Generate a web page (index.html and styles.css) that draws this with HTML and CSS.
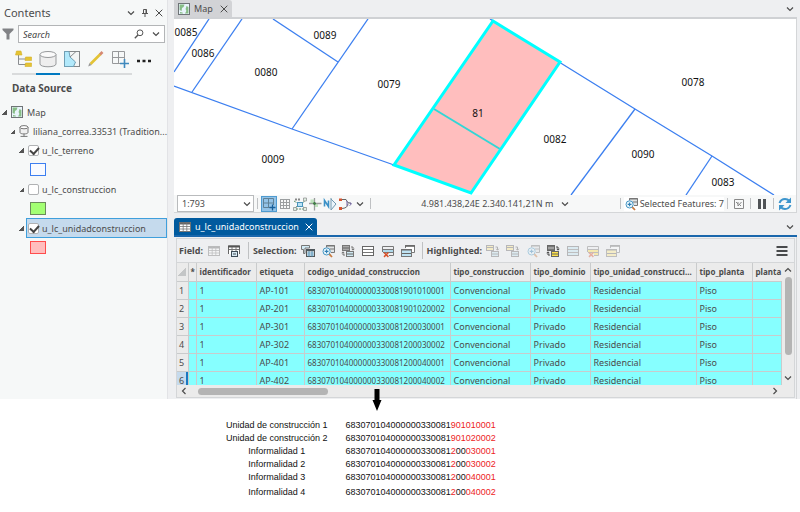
FILE: index.html
```html
<!DOCTYPE html>
<html lang="es">
<head>
  <meta charset="UTF-8">
  <title>Map - u_lc_unidadconstruccion</title>
  <link rel="stylesheet" href="styles.css">
</head>
<body>

  <svg class="sprite" aria-hidden="true">
    <symbol id="i-chevron" viewBox="0 0 8 8"><path d="M1 2.5 L4 5.5 L7 2.5" fill="none" stroke="currentColor" stroke-width="1.2"/></symbol>
    <symbol id="i-close" viewBox="0 0 8 8"><path d="M0.7 0.7 L7.3 7.3 M7.3 0.7 L0.7 7.3" fill="none" stroke="currentColor"/></symbol>
    <symbol id="i-mapa" viewBox="0 0 12 12">
      <rect x="0.5" y="0.5" width="11" height="11" fill="#e9f4fb" stroke="#6f7477"/>
      <path d="M1.6 1.6 H6.5 L5.6 4 L4 5 L3.6 8 L1.6 7 Z M8.5 3 L10.4 4 V10.4 H7 L8.4 8 L7.6 6 Z M2 9 L4.5 9.4 L5 10.4 H2 Z" fill="#86bd86"/>
    </symbol>
    <symbol id="i-sheet" viewBox="0 0 14 14">
      <rect x="1.5" y="2.5" width="11" height="9" fill="#fff" stroke="#777"/>
      <path d="M1.5 3.5 H12.5" stroke="#666" stroke-width="2"/>
      <path d="M1.5 6.5 H12.5 M1.5 9 H12.5 M5.2 3 V11 M8.8 3 V11" stroke="#777" stroke-width="0.8"/>
    </symbol>
    <symbol id="i-rows" viewBox="0 0 14 14">
      <rect x="1.5" y="2.5" width="11" height="9" fill="#fff" stroke="#666"/>
      <path d="M2 5.5 H12 M2 8.5 H12" stroke="#777"/>
    </symbol>
    <symbol id="i-rows-blue" viewBox="0 0 14 14">
      <rect x="1.5" y="2.5" width="11" height="9" fill="#bfe3f3" stroke="#666"/>
      <path d="M2 5.5 H12 M2 8.5 H12" stroke="#777"/>
    </symbol>
    <symbol id="i-rows-x" viewBox="0 0 14 14">
      <path d="M1.5 2.5 H12.5 V11.5 H8 M1.5 2.5 V8 M2 5.5 H12 M2 8.5 H12" fill="none" stroke="#777"/>
      <path d="M2 7 H12" stroke="#9fd4ea" stroke-width="1.6"/>
      <path d="M3 8.5 L7.4 12.9 M7.4 8.5 L3 12.9" stroke="#d8532c" stroke-width="1.5"/>
    </symbol>
    <symbol id="i-rows-yellow-x" viewBox="0 0 14 14">
      <path d="M1.5 2.5 H12.5 V11.5 H8 M1.5 2.5 V8 M2 5.5 H12 M2 8.5 H12" fill="none" stroke="#777"/>
      <path d="M2 7 H12 M8 10 H12" stroke="#ffdf4f" stroke-width="1.8"/>
      <path d="M3 8.5 L7.4 12.9 M7.4 8.5 L3 12.9" stroke="#d8532c" stroke-width="1.5"/>
    </symbol>
    <symbol id="i-stack" viewBox="0 0 14 14">
      <path d="M4.5 4 V1.5 H13.5 V8.5 H11" fill="#fff" stroke="#777"/>
      <path d="M4 2 H14" stroke="#666" stroke-width="1.6"/>
      <rect x="0.5" y="5.5" width="10" height="7" fill="#bfe3f3" stroke="#777"/>
      <path d="M0.5 6 H10.5 M1 9.5 H10" stroke="#666"/>
    </symbol>
    <symbol id="i-stack-yellow" viewBox="0 0 14 14">
      <path d="M4.5 4 V1.5 H13.5 V8.5 H11" fill="#fff" stroke="#777"/>
      <path d="M4 2 H14" stroke="#666" stroke-width="1.6"/>
      <rect x="0.5" y="5.5" width="10" height="7" fill="#ffe98a" stroke="#777"/>
      <path d="M0.5 6 H10.5 M1 9.5 H10" stroke="#666"/>
    </symbol>
    <symbol id="i-sel" viewBox="0 0 14 14">
      <path d="M2.5 9.5 V5.5 H0.5 V1.5 H8.5 V4 H4 V9.5 Z" fill="#d3ecf6" stroke="#777"/>
      <rect x="5.5" y="5.5" width="8" height="7" fill="#fff" stroke="#555"/>
      <path d="M5 6.3 H14" stroke="#4e5a60" stroke-width="2"/>
      <path d="M6 9 H13 M6 11 H13 M8 7 V13 M11 7 V13" stroke="#3f87ad" stroke-width="0.8"/>
    </symbol>
    <symbol id="i-zoom" viewBox="0 0 14 14">
      <path d="M5.5 3.5 V1.5 H13.5 V8.5 H10" fill="#e1e4e5" stroke="#777"/>
      <path d="M5 2 H14 M9 5 H13" stroke="#777"/>
      <circle cx="5.6" cy="7.4" r="3.6" fill="#e9f6fc" stroke="#4696c4"/>
      <path d="M3.7 7.4 H7.5 M5.6 5.5 V9.3" stroke="#2f7fb4" stroke-width="1.1"/>
      <path d="M8.3 10.2 L11 13" stroke="#c8793e" stroke-width="1.8"/>
    </symbol>
    <symbol id="i-switch" viewBox="0 0 14 14">
      <rect x="1.5" y="1.5" width="7" height="5" fill="#a9a9a9" stroke="#777"/>
      <rect x="5.5" y="7.5" width="7" height="5" fill="#cfe8f2" stroke="#777"/>
      <path d="M2 4 H8 M6 10 H12" stroke="#666"/>
      <path d="M10 3 H12 V6 M10.7 4.8 L12 6.2 L13.3 4.8 M4 11 H2 V8 M0.7 9.2 L2 7.8 L3.3 9.2" fill="none" stroke="#666" stroke-width="0.9"/>
    </symbol>
    <symbol id="i-switch-yellow" viewBox="0 0 14 14">
      <rect x="1.5" y="1.5" width="7" height="5" fill="#777" stroke="#666"/>
      <rect x="5.5" y="7.5" width="7" height="5" fill="#ffe24a" stroke="#666"/>
      <path d="M2 4 H8" stroke="#ccc"/>
      <path d="M6 10 H12" stroke="#666"/>
      <path d="M10 3 H12 V6 M10.7 4.8 L12 6.2 L13.3 4.8 M4 11 H2 V8 M0.7 9.2 L2 7.8 L3.3 9.2" fill="none" stroke="#444"/>
    </symbol>
    <symbol id="i-swap" viewBox="0 0 14 14">
      <rect x="0.5" y="1.5" width="7" height="5" fill="#ffe98a" stroke="#666"/>
      <rect x="5.5" y="7.5" width="7" height="5" fill="#bfe3f3" stroke="#666"/>
      <path d="M1 3.5 H7 M6 10 H12" stroke="#666"/>
      <path d="M9.5 3 H11.5 V6 M10.2 4.8 L11.5 6.2 L12.8 4.8" fill="none" stroke="#555"/>
    </symbol>
  </svg>

  <div class="workspace">
    <aside class="contents">
      <div class="contents-head">
        <h1>Contents</h1>
        <button class="plain" aria-label="Opciones"><svg class="i8"><use href="#i-chevron"/></svg></button>
        <button class="plain" aria-label="Fijar"><svg class="i8" viewBox="0 0 8 8"><path d="M2.5 0.5 H5.5 V4.5 H2.5 Z M1 4.5 H7 M4 4.5 V8" fill="none" stroke="#555"/><path d="M5 0.5 V4.5" stroke="#555"/></svg></button>
        <button class="plain" aria-label="Cerrar"><svg class="i8"><use href="#i-close"/></svg></button>
      </div>

      <div class="search-row">
        <svg class="i12" viewBox="0 0 12 12"><path d="M0.5 0.5 H11.5 V2 L7.5 6 V11.5 H4.5 V6 L0.5 2 Z" fill="#808285"/></svg>
        <div class="search-box">
          <input type="text" placeholder="Search" aria-label="Search">
          <button class="plain" aria-label="Buscar"><svg class="i10" viewBox="0 0 10 10"><circle cx="6" cy="3.8" r="2.9" fill="none" stroke="#555"/><path d="M4 6 L0.8 9.2" stroke="#555" stroke-width="1.4"/></svg></button>
          <button class="plain" aria-label="Opciones de búsqueda"><svg class="i8"><use href="#i-chevron"/></svg></button>
        </div>
      </div>

      <div class="views">
        <button class="view" aria-label="Drawing Order"><svg class="i18" viewBox="0 0 18 18"><path d="M3.5 5 V14.5 H11 M3.5 9 H11" fill="none" stroke="#8a8d90"/><path d="M1.5 1 H6 L7 5 H0.5 Z M10.5 7 H16.5 V10.5 H10 Z M10.5 13 H16.5 V16.5 H10 Z" fill="#e5c433" stroke="#d3b02b" stroke-width="0.6"/></svg></button>
        <button class="view active" aria-label="Data Source"><svg class="i18" viewBox="0 0 18 18"><path d="M1 4.5 V14 C1 17.7 17 17.7 17 14 V4.5" fill="#eee" stroke="#97999b"/><ellipse cx="9" cy="4.5" rx="8" ry="3" fill="#fafafa" stroke="#97999b"/></svg></button>
        <button class="view" aria-label="Selection"><svg class="i18" viewBox="0 0 18 18"><rect x="1.5" y="1.5" width="15" height="15" fill="#f3f5f5" stroke="#85888a"/><path d="M1.5 1.5 H6 L7 7 L12.5 12 L10.5 16.5 H1.5 Z" fill="#b2e9fb" stroke="#6f9fb5"/><path d="M7 7 L13 1.5" stroke="#85888a"/></svg></button>
        <button class="view" aria-label="Editing"><svg class="i18" viewBox="0 0 18 18"><path d="M3.5 14 L13.5 4" stroke="#e3c336" stroke-width="2.6"/><path d="M13 4.5 L15.5 2" stroke="#d58872" stroke-width="2.6"/><path d="M4.6 15.1 L2.4 12.9 L1.2 16.6 Z" fill="#999"/></svg></button>
        <button class="view" aria-label="Snapping"><svg class="i18" viewBox="0 0 18 18"><path d="M1.5 1.5 H13.5 V9 M1.5 1.5 V13.5 H9 M7.5 1.5 V13.5 M1.5 7.5 H13.5" fill="none" stroke="#97999b"/><path d="M13.5 9 V18 M9 13.5 H18" stroke="#4089bd" stroke-width="1.6"/></svg></button>
        <button class="view more" aria-label="Más"><svg class="i18" viewBox="0 0 18 18"><path d="M2 11 H5 M7.5 11 H10.5 M13 11 H16" stroke="#222" stroke-width="2.4"/></svg></button>
      </div>

      <h2>Data Source</h2>

      <ul class="tree">
        <li class="row"><span class="arrow"></span><svg class="i12"><use href="#i-mapa"/></svg>Map</li>
        <li class="row source"><span class="arrow"></span><svg class="i12" viewBox="0 0 12 12"><path d="M2 2 V7.5 C2 9.4 10 9.4 10 7.5 V2" fill="#f0f0f0" stroke="#777"/><ellipse cx="6" cy="2.2" rx="4" ry="1.6" fill="#fff" stroke="#777"/><path d="M6 9 V11.5 M2.5 11.4 H9.5" stroke="#777"/></svg><span class="elide">liliana_correa.33531 (Tradition...</span></li>
        <li class="row layer"><span class="arrow"></span><label><input type="checkbox" checked>u_lc_terreno</label></li>
        <li class="swatch"><span class="symbol terreno"></span></li>
        <li class="row layer"><span class="arrow"></span><label><input type="checkbox">u_lc_construccion</label></li>
        <li class="swatch"><span class="symbol construccion"></span></li>
        <li class="row layer selected"><span class="arrow"></span><label><input type="checkbox" checked>u_lc_unidadconstruccion</label></li>
        <li class="swatch"><span class="symbol unidad"></span></li>
      </ul>
    </aside>

    <main>
      <div class="tabs map-tabs">
        <div class="tab"><svg class="i12"><use href="#i-mapa"/></svg>Map<button class="plain" aria-label="Cerrar Map"><svg class="i8"><use href="#i-close"/></svg></button></div>
        <button class="plain" aria-label="Lista de vistas"><svg class="i8"><use href="#i-chevron"/></svg></button>
      </div>

      <section class="map-view">
        <svg class="map">
          <g class="terrenos">
            <path d="M35 0 L0 53"/>
            <path d="M68 0 L18 73"/>
            <path d="M99 0 L164 43"/>
            <path d="M194 0 L118 110"/>
            <path d="M0 67 L118 110 L220 146"/>
            <path d="M316 0 L385 43 L461 90 L538 137 L600 176"/>
            <path d="M461 90 L397 176"/>
            <path d="M538 137 L512 176"/>
          </g>
          <path class="unidad-fill" d="M319 2 L386 43 L297 174 L220 146 Z"/>
          <path class="unidad-mid" d="M260 90 L326 130"/>
          <path class="unidad-edge" d="M319 2 L386 43 L297 174 L220 146 Z"/>
          <g class="labels">
            <text x="12" y="17">0085</text>
            <text x="29" y="38">0086</text>
            <text x="151" y="20">0089</text>
            <text x="92" y="57">0080</text>
            <text x="215" y="69">0079</text>
            <text x="99" y="144">0009</text>
            <text x="519" y="67">0078</text>
            <text x="381" y="124">0082</text>
            <text x="469" y="139">0090</text>
            <text x="549" y="167">0083</text>
            <text x="304" y="98">81</text>
          </g>
        </svg>

        <div class="status">
          <div class="scale">
            <select aria-label="Escala"><option>1:793</option></select>
            <svg class="i8"><use href="#i-chevron"/></svg>
          </div>
          <span class="sep"></span>
          <button class="tool on" aria-label="Snapping"><svg class="i14" viewBox="0 0 14 14"><path d="M1.5 1.5 H11.5 V8 M1.5 1.5 V10.5 H8 M6.5 1.5 V10.5 M1.5 6 H11.5" fill="none" stroke="#5f8197"/><path d="M10.5 7.5 V13.5 M7.5 10.5 H13.5" stroke="#185f99" stroke-width="1.3"/></svg></button>
          <button class="tool" aria-label="Grid"><svg class="i14" viewBox="0 0 14 14"><path d="M2.5 2 V12 M5.5 2 V12 M8.5 2 V12 M11.5 2 V12 M2 2.5 H12 M2 5.5 H12 M2 8.5 H12 M2 11.5 H12" stroke="#9b9ea0"/></svg></button>
          <button class="tool" aria-label="Inference"><svg class="i14" viewBox="0 0 14 14"><path d="M1 4 L6 7 L1 12 H12 L8 7 L13 3" fill="none" stroke="#5b8e68" stroke-dasharray="2 1"/><path d="M2 2.5 H8" stroke="#888" stroke-width="2" stroke-dasharray="2 1"/><rect x="4.5" y="5.5" width="5" height="4" fill="#b9e2f4" stroke="#4a94bc"/><path d="M0.5 10.5 H3.5 V13.5 H0.5 Z M10.5 10.5 H13.5 V13.5 H10.5 Z M10.5 1 H13.5 V4 H10.5 Z" fill="#dff0e3" stroke="#888" stroke-width="0.7"/></svg></button>
          <button class="tool" aria-label="Constraints"><svg class="i14" viewBox="0 0 14 14"><path d="M1 6.5 H13.5 M6.5 1 V13.5" stroke="#9a9c9d" stroke-width="1.3"/><path d="M2.5 2.500 H6 V6 H2.500 Z M7 7 H10 V10 H7 Z" fill="#9bd598" opacity="0.6"/><path d="M5 6.5 H8 M6.5 5 V8" stroke="#417c46" stroke-width="1.4"/></svg></button>
          <button class="tool" aria-label="Ground to grid"><svg class="i14" viewBox="0 0 14 14"><path d="M1.5 9.5 V3.5 L5.5 9.5 V3.5" fill="none" stroke="#3b91c7" stroke-width="1.6"/><path d="M8 1 V13 L13 7 L8 2" fill="#eaf4fa" stroke="#7198b0"/></svg></button>
          <button class="tool" aria-label="Dynamic constraints"><svg class="i14" viewBox="0 0 14 14"><path d="M2 2.5 H8 Q9 6.5 13 6.5 M10 6.5 Q10 11.5 3 11.5" fill="none" stroke="#666"/><path d="M1 1.5 H4 V4 H1 Z M1 10 H4 V13 H1 Z" fill="#d8542f"/><path d="M9 4 V9 M11.5 5 L13.5 7 L11.5 8.5" fill="none" stroke="#7566a8"/></svg></button>
          <button class="tool" aria-label="Más herramientas"><svg class="i8"><use href="#i-chevron"/></svg></button>
          <span class="sep"></span>
          <span class="coords">4.981.438,24E 2.340.141,21N m <button class="plain" aria-label="Unidades"><svg class="i8"><use href="#i-chevron"/></svg></button></span>
          <span class="sep"></span>
          <button class="features"><svg class="i14"><use href="#i-zoom"/></svg>Selected Features: 7</button>
          <span class="sep"></span>
          <button class="tool wide" aria-label="Extent"><svg class="i14" viewBox="0 0 14 14"><path d="M2.5 2.5 H11.5 V11.5 H2.5 Z M4 5 L6 7 M6 5 V9 L9.5 5 M7 7 L9 9" fill="none" stroke="#888"/></svg></button>
          <span class="sep"></span>
          <button class="tool wide" aria-label="Pausa"><svg class="i14" viewBox="0 0 14 14"><path d="M4.5 2 V12 M9.5 2 V12" stroke="#505356" stroke-width="3"/></svg></button>
          <span class="sep"></span>
          <button class="tool wide" aria-label="Actualizar"><svg class="i14" viewBox="0 0 14 14"><path d="M1.5 6 Q3 2 7 2 Q9.5 2 11.5 4 M12.5 8 Q11 12 7 12 Q4.5 12 2.5 10" fill="none" stroke="#3d95cd" stroke-width="2"/><path d="M13 0.5 V6 H7.5 Z M1 13.5 V8 H6.5 Z" fill="#3d95cd"/></svg></button>
        </div>
      </section>

      <div class="tabs table-tabs">
        <div class="tab"><svg class="i14"><use href="#i-sheet"/></svg>u_lc_unidadconstruccion<button class="plain" aria-label="Cerrar tabla"><svg class="i8"><use href="#i-close"/></svg></button></div>
        <button class="plain" aria-label="Lista de tablas"><svg class="i8"><use href="#i-chevron"/></svg></button>
      </div>

      <section class="table-view">
        <div class="toolbar">
          <strong>Field:</strong>
          <button class="icon off" aria-label="Add field"><svg class="i14"><use href="#i-sheet"/></svg></button>
          <button class="icon" aria-label="Calculate"><svg class="i14" viewBox="0 0 14 14"><path d="M1.5 10 V2 H12.5 V10" fill="#fff" stroke="#666"/><path d="M1 2.5 H13" stroke="#555" stroke-width="2"/><path d="M2 5.5 H12 M5 3 V8 M9 3 V8" stroke="#777"/><rect x="4.5" y="7.5" width="6" height="5" fill="#d7e8f2" stroke="#3c4a55"/><path d="M6 10 H9" stroke="#3c4a55"/></svg></button>
          <span class="sep"></span>
          <strong>Selection:</strong>
          <button class="icon" aria-label="Select by attributes"><svg class="i14"><use href="#i-sel"/></svg></button>
          <button class="icon" aria-label="Zoom to selection"><svg class="i14"><use href="#i-zoom"/></svg></button>
          <button class="icon" aria-label="Switch selection"><svg class="i14"><use href="#i-switch"/></svg></button>
          <button class="icon" aria-label="Select all"><svg class="i14"><use href="#i-rows"/></svg></button>
          <button class="icon" aria-label="Delete selection"><svg class="i14"><use href="#i-rows-x"/></svg></button>
          <button class="icon" aria-label="Copy selection"><svg class="i14"><use href="#i-stack"/></svg></button>
          <span class="sep"></span>
          <strong>Highlighted:</strong>
          <button class="icon off" aria-label="Unselect"><svg class="i14"><use href="#i-swap"/></svg></button>
          <button class="icon off" aria-label="Reselect"><svg class="i14"><use href="#i-swap"/></svg></button>
          <button class="icon off" aria-label="Zoom to highlighted"><svg class="i14"><use href="#i-zoom"/></svg></button>
          <button class="icon" aria-label="Switch highlighted"><svg class="i14"><use href="#i-switch-yellow"/></svg></button>
          <button class="icon off" aria-label="Highlight all"><svg class="i14"><use href="#i-rows-blue"/></svg></button>
          <button class="icon off" aria-label="Delete highlighted"><svg class="i14"><use href="#i-rows-yellow-x"/></svg></button>
          <button class="icon off" aria-label="Copy highlighted"><svg class="i14"><use href="#i-stack-yellow"/></svg></button>
          <button class="icon menu" aria-label="Menu"><svg class="i12" viewBox="0 0 12 12"><path d="M0.5 2 H11.5 M0.5 6 H11.5 M0.5 10 H11.5" stroke="#484a4c" stroke-width="2"/></svg></button>
        </div>

        <div class="grid">
          <div class="rows">
            <table>
              <colgroup>
                <col class="c-num"><col class="c-mark"><col class="c-id"><col class="c-etiqueta"><col class="c-codigo"><col class="c-tipo"><col class="c-dominio"><col class="c-unidad"><col class="c-planta"><col>
              </colgroup>
              <thead>
                <tr><th class="corner"><span></span></th><th class="mark">*</th><th>identificador</th><th>etiqueta</th><th>codigo_unidad_construccion</th><th>tipo_construccion</th><th>tipo_dominio</th><th>tipo_unidad_construcci...</th><th>tipo_planta</th><th class="end">planta</th></tr>
              </thead>
              <tbody>
                <tr><th>1</th><td></td><td>1</td><td>AP-101</td><td class="codigo">683070104000000330081901010001</td><td>Convencional</td><td>Privado</td><td>Residencial</td><td>Piso</td><td></td></tr>
                <tr><th>2</th><td></td><td>1</td><td>AP-201</td><td class="codigo">683070104000000330081901020002</td><td>Convencional</td><td>Privado</td><td>Residencial</td><td>Piso</td><td></td></tr>
                <tr><th>3</th><td></td><td>1</td><td>AP-301</td><td class="codigo">683070104000000330081200030001</td><td>Convencional</td><td>Privado</td><td>Residencial</td><td>Piso</td><td></td></tr>
                <tr><th>4</th><td></td><td>1</td><td>AP-302</td><td class="codigo">683070104000000330081200030002</td><td>Convencional</td><td>Privado</td><td>Residencial</td><td>Piso</td><td></td></tr>
                <tr><th>5</th><td></td><td>1</td><td>AP-401</td><td class="codigo">683070104000000330081200040001</td><td>Convencional</td><td>Privado</td><td>Residencial</td><td>Piso</td><td></td></tr>
                <tr class="current"><th>6</th><td></td><td>1</td><td>AP-402</td><td class="codigo">683070104000000330081200040002</td><td>Convencional</td><td>Privado</td><td>Residencial</td><td>Piso</td><td></td></tr>
              </tbody>
            </table>
          </div>
          <div class="vscroll"><svg class="i8 up"><use href="#i-chevron"/></svg><span class="thumb"></span><svg class="i8"><use href="#i-chevron"/></svg></div>
          <div class="hscroll"><svg class="i8 left"><use href="#i-chevron"/></svg><span class="thumb"></span><svg class="i8 right"><use href="#i-chevron"/></svg></div>
        </div>
      </section>
    </main>
  </div>

  <section class="notes">
    <svg class="pointer" viewBox="0 0 10 22"><path d="M2.5 0 H7.5 V11 H9.5 L5 22 L0.5 11 H2.5 Z" fill="#000"/></svg>
    <table>
      <tr><th>Unidad de construcción 1</th><td>683070104000000330081<em>901010001</em></td></tr>
      <tr><th>Unidad de construcción 2</th><td>683070104000000330081<em>901020002</em></td></tr>
      <tr><th>Informalidad 1</th><td>683070104000000330081<em>2</em>00<em>030001</em></td></tr>
      <tr><th>Informalidad 2</th><td>683070104000000330081<em>2</em>00<em>030002</em></td></tr>
      <tr><th>Informalidad 3</th><td>683070104000000330081<em>2</em>00<em>040001</em></td></tr>
      <tr class="last"><th>Informalidad 4</th><td>683070104000000330081<em>2</em>00<em>040002</em></td></tr>
    </table>
  </section>

</body>
</html>
```

FILE: styles.css
```css
* {
  box-sizing: border-box;
}

body {
  margin: 0;
  font-family: "Noto Sans", "Open Sans", sans-serif;
  font-size: 9px;
  color: #4c4c4c;
  background: white;
}

svg {
  display: block;
  flex: none;
}

.sprite {
  width: 0;
  height: 0;
  position: absolute;
}

.i8 { width: 8px; height: 8px; }
.i10 { width: 10px; height: 10px; }
.i12 { width: 12px; height: 12px; }
.i14 { width: 14px; height: 14px; }
.i18 { width: 18px; height: 18px; }

button {
  padding: 0;
  border: none;
  background: none;
  font: inherit;
  color: inherit;
  cursor: pointer;
}

.workspace {
  display: flex;
  gap: 6px;
  padding-right: 3px;
  background: #eeeff1;
}

/* Contents */
.contents {
  width: 168px;
  flex: none;
  background: #f6f8f8;
  border-right: 1px solid #e2e3e6;
}

.contents-head {
  display: flex;
  align-items: center;
  gap: 6px;
  height: 25px;
  padding: 0 4px;
}

h1 {
  flex: 1;
  margin: 0;
  font-size: 11px;
  font-weight: normal;
}

.search-row {
  display: flex;
  align-items: center;
  gap: 4px;
  padding: 0 2px;
}

.search-box {
  display: flex;
  align-items: center;
  gap: 8px;
  flex: 1;
  min-width: 0;
  height: 18px;
  padding: 0 4px;
  background: white;
  border: 1px solid #b3b5b7;
}

.search-box input {
  flex: 1;
  width: 0;
  padding: 0;
  border: none;
  outline: none;
  font: italic 9px "Noto Sans", sans-serif;
}

.search-box input::placeholder {
  color: #444;
}

.views {
  display: flex;
  padding: 6px 0 0 12px;
}

.view {
  display: flex;
  justify-content: center;
  width: 24px;
  height: 26px;
  padding-top: 1px;
  border-bottom: 2px solid #d9dbdc;
}

.view.active {
  border-color: #0079c1;
}

.view.more {
  border-color: transparent;
}

h2 {
  margin: 0;
  padding-left: 12px;
  font-size: 10px;
  line-height: 27px;
}

.tree {
  margin: 0;
  padding: 0;
  list-style: none;
}

.row {
  display: flex;
  align-items: center;
  gap: 4px;
  height: 20px;
  padding-left: 2px;
}

.row.source {
  gap: 3px;
  height: 18px;
  padding-left: 10px;
}

.row.layer {
  padding-left: 19px;
  gap: 2px;
}

.elide {
  white-space: nowrap;
}

.row label {
  display: flex;
  align-items: center;
  gap: 3px;
  flex: 1;
  height: 20px;
  padding-left: 1px;
  border: 1px solid transparent;
}

.row.selected label {
  background: #c5daed;
  border-color: #3f9fdc;
}

.arrow {
  width: 5px;
  height: 5px;
  flex: none;
  background: linear-gradient(135deg, transparent 50%, #555 50%);
}

.row input {
  appearance: none;
  width: 11px;
  height: 11px;
  margin: 0;
  background: white;
  border: 1px solid #b0b2b4;
  border-radius: 2px;
}

.row input:checked::before {
  content: "";
  display: block;
  width: 7px;
  height: 4px;
  margin: 1px;
  border-left: 2px solid #444;
  border-bottom: 2px solid #444;
  transform: rotate(-48deg);
}

.swatch {
  display: flex;
  align-items: center;
  height: 19px;
  padding-left: 30px;
}

.symbol {
  width: 16px;
  height: 13px;
  border: 1px solid;
}

.terreno { border-color: #3c7ef0; background: #f8faff; }
.construccion { border-color: #6c8b5b; background: #a3ff73; }
.unidad { border-color: #ff4d4d; background: #ffbebe; }

/* Tabs */
main {
  flex: 1;
  min-width: 0;
}

.tabs {
  display: flex;
  align-items: center;
  justify-content: space-between;
  height: 19px;
  padding-right: 3px;
}

.tab {
  display: flex;
  align-items: center;
  gap: 4px;
  height: 100%;
  padding: 0 4px;
}

.tab button {
  margin-left: 3px;
}

.map-tabs {
  border-bottom: 2px solid #cfd1d4;
}

.map-tabs .tab {
  background: #d2d3d6;
  border-radius: 0 3px 0 0;
}

.table-tabs {
  margin-top: 5px;
  border-bottom: 2px solid #1a67ac;
}

.table-tabs .tab {
  gap: 3px;
  color: white;
  background: #005a9e;
  border-radius: 3px 3px 0 0;
}

/* Map */
.map-view {
  background: white;
  border-right: 1px solid #d4d6d8;
}

.map {
  width: 100%;
  height: 176px;
}

.terrenos path {
  fill: none;
  stroke: #3c7ff0;
  stroke-width: 1.3;
}

.unidad-fill {
  fill: #ffbebe;
}

.unidad-mid {
  stroke: #32d6d6;
  stroke-width: 2;
}

.unidad-edge {
  fill: none;
  stroke: #00ffff;
  stroke-width: 3;
}

.labels {
  font-size: 10px;
  text-anchor: middle;
  fill: #111;
}

.status {
  display: flex;
  align-items: center;
  height: 18px;
  padding: 0 3px;
  background: #f7f8f8;
  border-bottom: 1px solid #d4d6d8;
}

.scale {
  display: grid;
  align-items: center;
  width: 77px;
  height: 17px;
}

.scale select,
.scale svg {
  grid-area: 1 / 1;
}

.scale select {
  appearance: none;
  height: 17px;
  padding: 0 4px;
  border: 1px solid #b9bbbd;
  border-radius: 0;
  background: white;
  color: inherit;
  font: inherit;
}

.scale svg {
  justify-self: end;
  margin-right: 3px;
  pointer-events: none;
}

.sep {
  width: 1px;
  height: 11px;
  margin: 0 3px;
  background: #bfc1c3;
}

.tool {
  display: flex;
  align-items: center;
  justify-content: center;
  width: 15px;
  height: 16px;
}

.tool.on {
  width: 16px;
  background: #93c3e8;
  border: 1px solid #4f9bd0;
}

.tool.wide {
  width: 16px;
}

.coords {
  display: flex;
  align-items: center;
  justify-content: center;
  gap: 8px;
  flex: 1;
}

.features {
  display: flex;
  align-items: center;
  gap: 2px;
  background: white;
}

/* Attribute table */
.table-view {
  padding: 1px 1px 1px 2px;
  border-right: 1px solid #d4d6d8;
}

.toolbar {
  display: flex;
  align-items: center;
  height: 25px;
  padding: 0 2px;
  border: 1px solid #d4d6d8;
}

.toolbar strong {
  margin-right: 1px;
}

.toolbar .sep {
  height: 17px;
  margin: 0 4px;
}

.icon {
  display: flex;
  align-items: center;
  justify-content: center;
  width: 20px;
  height: 20px;
}

.icon.off {
  opacity: 0.4;
}

.icon.menu {
  margin-left: auto;
}

.grid {
  display: grid;
  grid-template-columns: minmax(0, 1fr) 12px;
  background: #ebebeb;
  border: 1px solid #d4d6d8;
  border-top: none;
}

.rows {
  height: 122px;
  overflow: hidden;
}

.rows table {
  width: 100%;
  table-layout: fixed;
  border-collapse: collapse;
}

.c-num { width: 11px; }
.c-mark { width: 8px; }
.c-id { width: 60px; }
.c-etiqueta { width: 48px; }
.c-codigo { width: 146px; }
.c-tipo { width: 80px; }
.c-dominio { width: 60px; }
.c-unidad { width: 106px; }
.c-planta { width: 56px; }

.rows tr {
  height: 18px;
}

.rows th,
.rows td {
  padding: 0 3px;
  border-right: 1px solid #c9cbcc;
  border-bottom: 1px solid #c9cbcc;
  text-align: left;
  white-space: nowrap;
  overflow: hidden;
  line-height: 17px;
}

.rows td {
  background: #86ffff;
}

.rows thead th {
  font-size: 8px;
}

.rows tbody th {
  padding: 0 2px;
  font-weight: normal;
}

.rows .mark {
  padding: 0 2px;
}

.rows .end {
  padding-right: 0;
  border-right: none;
}

.rows .corner {
  padding: 0 1px;
}

.corner span {
  display: block;
  width: 8px;
  height: 8px;
  background: linear-gradient(135deg, transparent 50%, #c4c6c7 50%);
}

.rows .codigo {
  font-size: 8px;
}

.rows .current th {
  background: #c5daed;
  box-shadow: inset -2px 0 #1a78c2;
}

.vscroll {
  display: flex;
  flex-direction: column;
  align-items: center;
  gap: 3px;
  padding: 3px 0;
}

.vscroll .thumb {
  width: 7px;
  height: 78px;
  margin-bottom: auto;
  background: #b4b4b4;
  border-radius: 4px;
}

.hscroll {
  display: flex;
  align-items: center;
  gap: 10px;
  height: 12px;
  padding: 0 3px;
}

.hscroll .thumb {
  width: 130px;
  height: 7px;
  margin-right: auto;
  background: #b4b4b4;
  border-radius: 4px;
}

.up { transform: rotate(180deg); }
.left { transform: rotate(90deg); }
.right { transform: rotate(-90deg); }

/* Notes under the window */
.notes {
  position: relative;
  padding: 20px 0 0 226px;
  font-family: "Liberation Sans", Arial, sans-serif;
  font-size: 9px;
  color: #111;
}

.pointer {
  position: absolute;
  top: -10px;
  left: 372px;
  width: 10px;
  height: 22px;
}

.notes table {
  border-collapse: collapse;
}

.notes th,
.notes td {
  padding: 0;
  font-weight: normal;
  line-height: 13px;
}

.notes td {
  padding-left: 18px;
}

.notes .last th,
.notes .last td {
  padding-top: 2px;
}

.notes em {
  font-style: normal;
  color: #ed1c24;
}
```
